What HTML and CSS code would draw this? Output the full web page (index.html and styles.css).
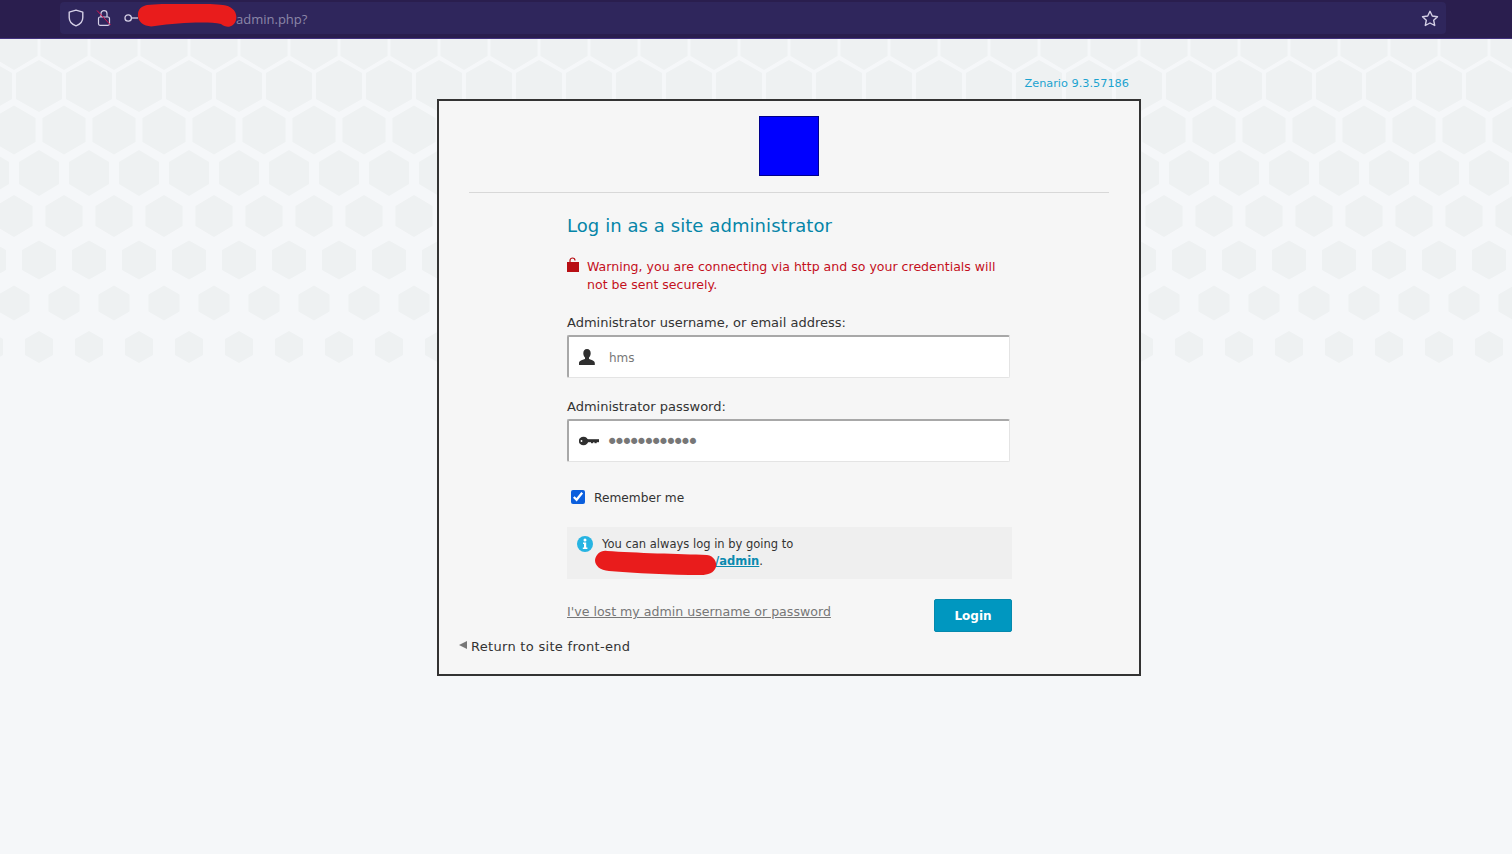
FILE: index.html
```html
<!DOCTYPE html>
<html lang="en">
<head>
    <meta charset="UTF-8">
    <meta name="viewport" content="width=device-width, initial-scale=1.0">
    <title>Zenario admin login</title>
    <link rel="stylesheet" href="styles.css">
</head>
<body>
    <div class="toolbar">
        <div class="urlbar">
            <svg class="ico-shield" width="16" height="18" viewBox="0 0 16 18" fill="none" stroke="#d5d0e6" stroke-width="1.4"><path d="M8 1.2 14.8 3.2V8.500C14.800 12.500 11.800 15.500 8 16.800 4.200 15.500 1.200 12.500 1.200 8.500V3.200Z" stroke-linejoin="round"/></svg>
            <svg class="ico-lock" width="16" height="18" viewBox="0 0 16 18" fill="none"><path d="M5 8V4.500C5 2.800 6.300 1.700 8 1.700S11 2.800 11 4.500V8" stroke="#d5d0e6" stroke-width="1.200"/><rect x="2.500" y="8" width="11" height="8.300" rx="1.500" stroke="#d5d0e6" stroke-width="1.200"/><path d="M1 1.500 14.500 16" stroke="#d8134f" stroke-width="1"/></svg>
            <svg class="ico-key" width="14" height="10" viewBox="0 0 14 10" fill="none" stroke="#d5d0e6" stroke-width="1.300"><circle cx="4.200" cy="5" r="3.200"/><path d="M7.400 5H14"/></svg>
            <span class="url-text">admin.php?</span>
            <svg class="ico-star" width="18" height="17" viewBox="0 0 18 17" fill="none" stroke="#d5d0e6" stroke-width="1.400" stroke-linejoin="round"><path d="M9 1.300 11.300 6 16.500 6.700 12.700 10.300 13.700 15.500 9 13 4.300 15.500 5.300 10.300 1.500 6.700 6.700 6Z"/></svg>
            <svg class="scribble scribble-url" width="100" height="24" viewBox="0 0 100 24"><path d="M10 1C30 -1 70 -1 86 1 95 2 101 8 99 16 97 23 90 25 84 20 70 17 40 19 18 22 8 24 0 18 1 10 1 5 5 2 10 1Z" fill="#e91c1c"/></svg>
        </div>
    </div>

    <svg class="hex-bg" width="1512" height="340" viewBox="0 39 1512 340" aria-hidden="true">
        <defs>
            <pattern id="h1" x="-11" y="12" width="50" height="60" patternUnits="userSpaceOnUse"><polygon points="25,2 48.500,16 48.500,44 25,58 1.500,44 1.500,16"/></pattern>
            <pattern id="h2" x="14" y="56" width="50" height="60" patternUnits="userSpaceOnUse"><polygon points="25,4 48,17 48,43 25,56 2,43 2,17"/></pattern>
            <pattern id="h3" x="-11" y="100" width="50" height="60" patternUnits="userSpaceOnUse"><polygon points="25,5.500 46.500,18 46.500,42 25,54.500 3.500,42 3.500,18"/></pattern>
            <pattern id="h4" x="14" y="143" width="50" height="60" patternUnits="userSpaceOnUse"><polygon points="25,7 45,19 45,41 25,53 5,41 5,19"/></pattern>
            <pattern id="h5" x="-11" y="186" width="50" height="60" patternUnits="userSpaceOnUse"><polygon points="25,9 43.500,20 43.500,40 25,51 6.500,40 6.500,20"/></pattern>
            <pattern id="h6" x="14" y="230" width="50" height="60" patternUnits="userSpaceOnUse"><polygon points="25,10.500 42,20 42,40 25,49.500 8,40 8,20"/></pattern>
            <pattern id="h7" x="-11" y="273" width="50" height="60" patternUnits="userSpaceOnUse"><polygon points="25,12.500 40.500,21.500 40.500,38.500 25,47.500 9.500,38.500 9.500,21.500"/></pattern>
            <pattern id="h8" x="14" y="317" width="50" height="60" patternUnits="userSpaceOnUse"><polygon points="25,14 39,22 39,38 25,46 11,38 11,22"/></pattern>
        </defs>
        <rect y="12" width="1512" height="60" fill="url(#h1)"/>
        <rect y="56" width="1512" height="60" fill="url(#h2)"/>
        <rect y="100" width="1512" height="60" fill="url(#h3)"/>
        <rect y="143" width="1512" height="60" fill="url(#h4)"/>
        <rect y="186" width="1512" height="60" fill="url(#h5)"/>
        <rect y="230" width="1512" height="60" fill="url(#h6)"/>
        <rect y="273" width="1512" height="60" fill="url(#h7)"/>
        <rect y="317" width="1512" height="60" fill="url(#h8)"/>
    </svg>

    <div class="wrapper">
        <div class="version">Zenario 9.3.57186</div>
        <div class="card">
            <div class="logo-row"><div class="logo"></div></div>

            <div class="form">
                <h1 class="title">Log in as a site administrator</h1>

                <p class="warning">
                    <svg class="ico-warn" width="12" height="15" viewBox="0 0 12 15"><path d="M3 6V3.500C3 2 4.300 1 5.500 1S8 2 8 3.500" fill="none" stroke="#b80f14" stroke-width="1.200"/><rect y="5" width="12" height="10" fill="#b80f14"/></svg>
                    Warning, you are connecting via http and so your credentials will not be sent securely.
                </p>

                <label class="field-label" for="username">Administrator username, or email address:</label>
                <div class="input-box">
                    <svg class="input-ico" viewBox="1 0 16 16" preserveAspectRatio="xMinYMid meet"><path d="M9 0C11.400 0 12.700 1.800 12.700 4.200 12.700 6 11.900 7.500 11 8.500V10C13.500 11 16.800 11.600 16.800 14V16H1V14C1 11.600 4.500 11 7 10V8.500C6.100 7.500 5.300 6 5.300 4.200 5.300 1.800 6.600 0 9 0Z" fill="#2f2f2f"/></svg>
                    <input class="text-input" id="username" type="text" value="hms">
                </div>

                <label class="field-label" for="password">Administrator password:</label>
                <div class="input-box">
                    <svg class="input-ico" viewBox="0 -3 20 16" preserveAspectRatio="xMinYMid meet"><ellipse cx="4.500" cy="5" rx="4.700" ry="4.300" fill="#2f2f2f"/><rect x="7" y="3.200" width="13" height="3" fill="#2f2f2f"/><rect x="12" y="5" width="2.200" height="2.200" fill="#2f2f2f"/><rect x="15.500" y="5" width="2.200" height="2.200" fill="#2f2f2f"/><circle cx="2.500" cy="5" r="0.900" fill="#fff"/></svg>
                    <input class="text-input password-input" id="password" type="password" value="abcdefghijkl">
                </div>

                <label class="remember">
                    <input class="remember-box" type="checkbox" checked>
                    <span class="remember-text">Remember me</span>
                </label>

                <div class="note">
                    <svg class="ico-info" width="16" height="16" viewBox="0 0 16 16"><circle cx="8" cy="8" r="8" fill="#27b4e2"/><circle cx="8" cy="3.900" r="1.500" fill="#fff"/><path d="M6 6.500H9.200V11.500H10.400V13H5.800V11.500H7V8H6Z" fill="#fff"/></svg>
                    <div class="note-text">
                        You can always log in by going to<br>
                        <span class="note-link-line"><a class="note-link" href="#">/admin</a>.</span>
                    </div>
                    <svg class="scribble scribble-note" width="122" height="26" viewBox="0 0 122 26"><path d="M12 1C40 3 85 4 112 5 119 6 122 12 121 17 119 23 113 25 106 25 75 25 40 23 14 21 5 20 0 16 0 10 1 4 6 0 12 1Z" fill="#e91c1c"/></svg>
                </div>

                <div class="actions">
                    <a class="lost-link" href="#">I've lost my admin username or password</a>
                    <button class="login-btn" type="button">Login</button>
                </div>
            </div>

            <a class="back-link" href="#"><span class="back-arrow"></span>Return to site front-end</a>
        </div>
    </div>
</body>
</html>
```

FILE: styles.css
```css
* {
    margin: 0;
    padding: 0;
    box-sizing: border-box;
}

body {
    font-family: 'DejaVu Sans', Verdana, sans-serif;
    font-size: 13px;
    background: #f5f7f9;
    color: #333;
    height: 854px;
    overflow: hidden;
    position: relative;
}

/* browser chrome at the top */
.toolbar {
    height: 39px;
    background: #2a1e4e;
    border-bottom: 1px solid #43327f;
    padding: 2px 66px 0 60px;
}

.urlbar {
    position: relative;
    height: 32px;
    background: #2f265c;
    border-radius: 4px;
    display: flex;
    align-items: center;
    padding-left: 8px;
}

.ico-lock {
    margin-left: 12px;
}

.ico-key {
    margin-left: 12px;
}

.url-text {
    margin-left: 98px;
    padding-top: 2px;
    font-family: 'Open Sans', 'Noto Sans', sans-serif;
    font-size: 13px;
    color: #8c86a8;
}

.ico-star {
    margin-left: auto;
    margin-right: 7px;
}

.scribble {
    position: absolute;
}

.scribble-url {
    left: 77px;
    top: 2px;
}

.hex-bg {
    position: absolute;
    left: 0;
    top: 39px;
    fill: #eef1f2;
}

.wrapper {
    position: relative;
    width: 704px;
    margin-left: 437px;
}

.version {
    text-align: right;
    padding: 38px 12px 0 0;
    height: 60px;
    font-size: 11.300px;
    color: #1ba3d0;
}

.card {
    background: #f6f6f6;
    border: 2px solid #333;
    height: 577px;
    padding: 15px 30px 0;
    position: relative;
}

.logo-row {
    display: flex;
    justify-content: center;
    padding-bottom: 16px;
    border-bottom: 1px solid #d8d8d8;
}

.logo {
    width: 60px;
    height: 60px;
    background: #0000ff;
    border: 1px solid #00008a;
}

.form {
    margin-left: 98px;
    width: 445px;
}

.title {
    font-size: 18px;
    font-weight: normal;
    letter-spacing: 0.07px;
    color: #0585a8;
    margin-top: 22px;
    line-height: 22px;
}

.warning {
    position: relative;
    margin-top: 21px;
    padding-left: 20px;
    font-size: 12.550px;
    line-height: 18px;
    color: #c4101c;
}

.ico-warn {
    position: absolute;
    left: 0;
    top: -1px;
}

.field-label {
    display: block;
    margin-top: 21px;
    line-height: 16px;
    color: #333;
}

.input-box {
    display: flex;
    align-items: center;
    width: 443px;
    height: 43px;
    margin-top: 4px;
    background: #fff;
    border: 1px solid #e4e4e4;
    border-top: 2px solid #a8a8a8;
    border-left: 2px solid #a8a8a8;
    border-radius: 2px;
    padding-left: 10px;
}

.input-ico {
    width: 20px;
    height: 16px;
    flex: none;
}

.text-input {
    flex: 1;
    min-width: 0;
    margin-left: 10px;
    padding-top: 2px;
    border: none;
    outline: none;
    background: transparent;
    font-family: 'DejaVu Sans', Verdana, sans-serif;
    font-size: 12px;
    color: #777;
}

/* dots are bigger and tighter than the font gives at 12px */
.password-input {
    margin-left: 7px;
    font-size: 21px;
    letter-spacing: -5.050px;
}

.remember {
    display: flex;
    align-items: center;
    gap: 9px;
    margin: 27px 0 0 4px;
    height: 16px;
    font-size: 12.200px;
    color: #333;
}

.remember-box {
    width: 14px;
    height: 14px;
    accent-color: #0b5fdd;
}

.remember-text {
    padding-top: 2px;
}

.note {
    position: relative;
    display: flex;
    gap: 9px;
    margin-top: 22px;
    height: 52px;
    padding: 9px 10px;
    background: #efefef;
    font-size: 11.500px;
    line-height: 17px;
}

.ico-info {
    flex: none;
}

.note-link-line {
    margin-left: 113px;
}

.note-link {
    color: #0a8ab0;
    font-weight: bold;
}

.scribble-note {
    left: 28px;
    top: 23px;
}

.actions {
    display: flex;
    justify-content: space-between;
    margin-top: 20px;
}

.lost-link {
    color: #777;
    font-size: 12.600px;
    line-height: 26px;
    height: 26px;
}

.login-btn {
    width: 78px;
    height: 33px;
    background: #0097c0;
    border: 1px solid #0589ad;
    border-radius: 2px;
    color: #fff;
    font-family: 'DejaVu Sans', Verdana, sans-serif;
    font-size: 12px;
    font-weight: bold;
}

.back-link {
    position: absolute;
    left: 20px;
    top: 537px;
    color: #333;
    text-decoration: none;
    letter-spacing: 0.300px;
    line-height: 18px;
}

.back-arrow {
    display: inline-block;
    width: 0;
    height: 0;
    margin-right: 4px;
    vertical-align: 2px;
    border-style: solid;
    border-width: 4.500px 8px 4.500px 0;
    border-color: transparent #777 transparent transparent;
}
```
